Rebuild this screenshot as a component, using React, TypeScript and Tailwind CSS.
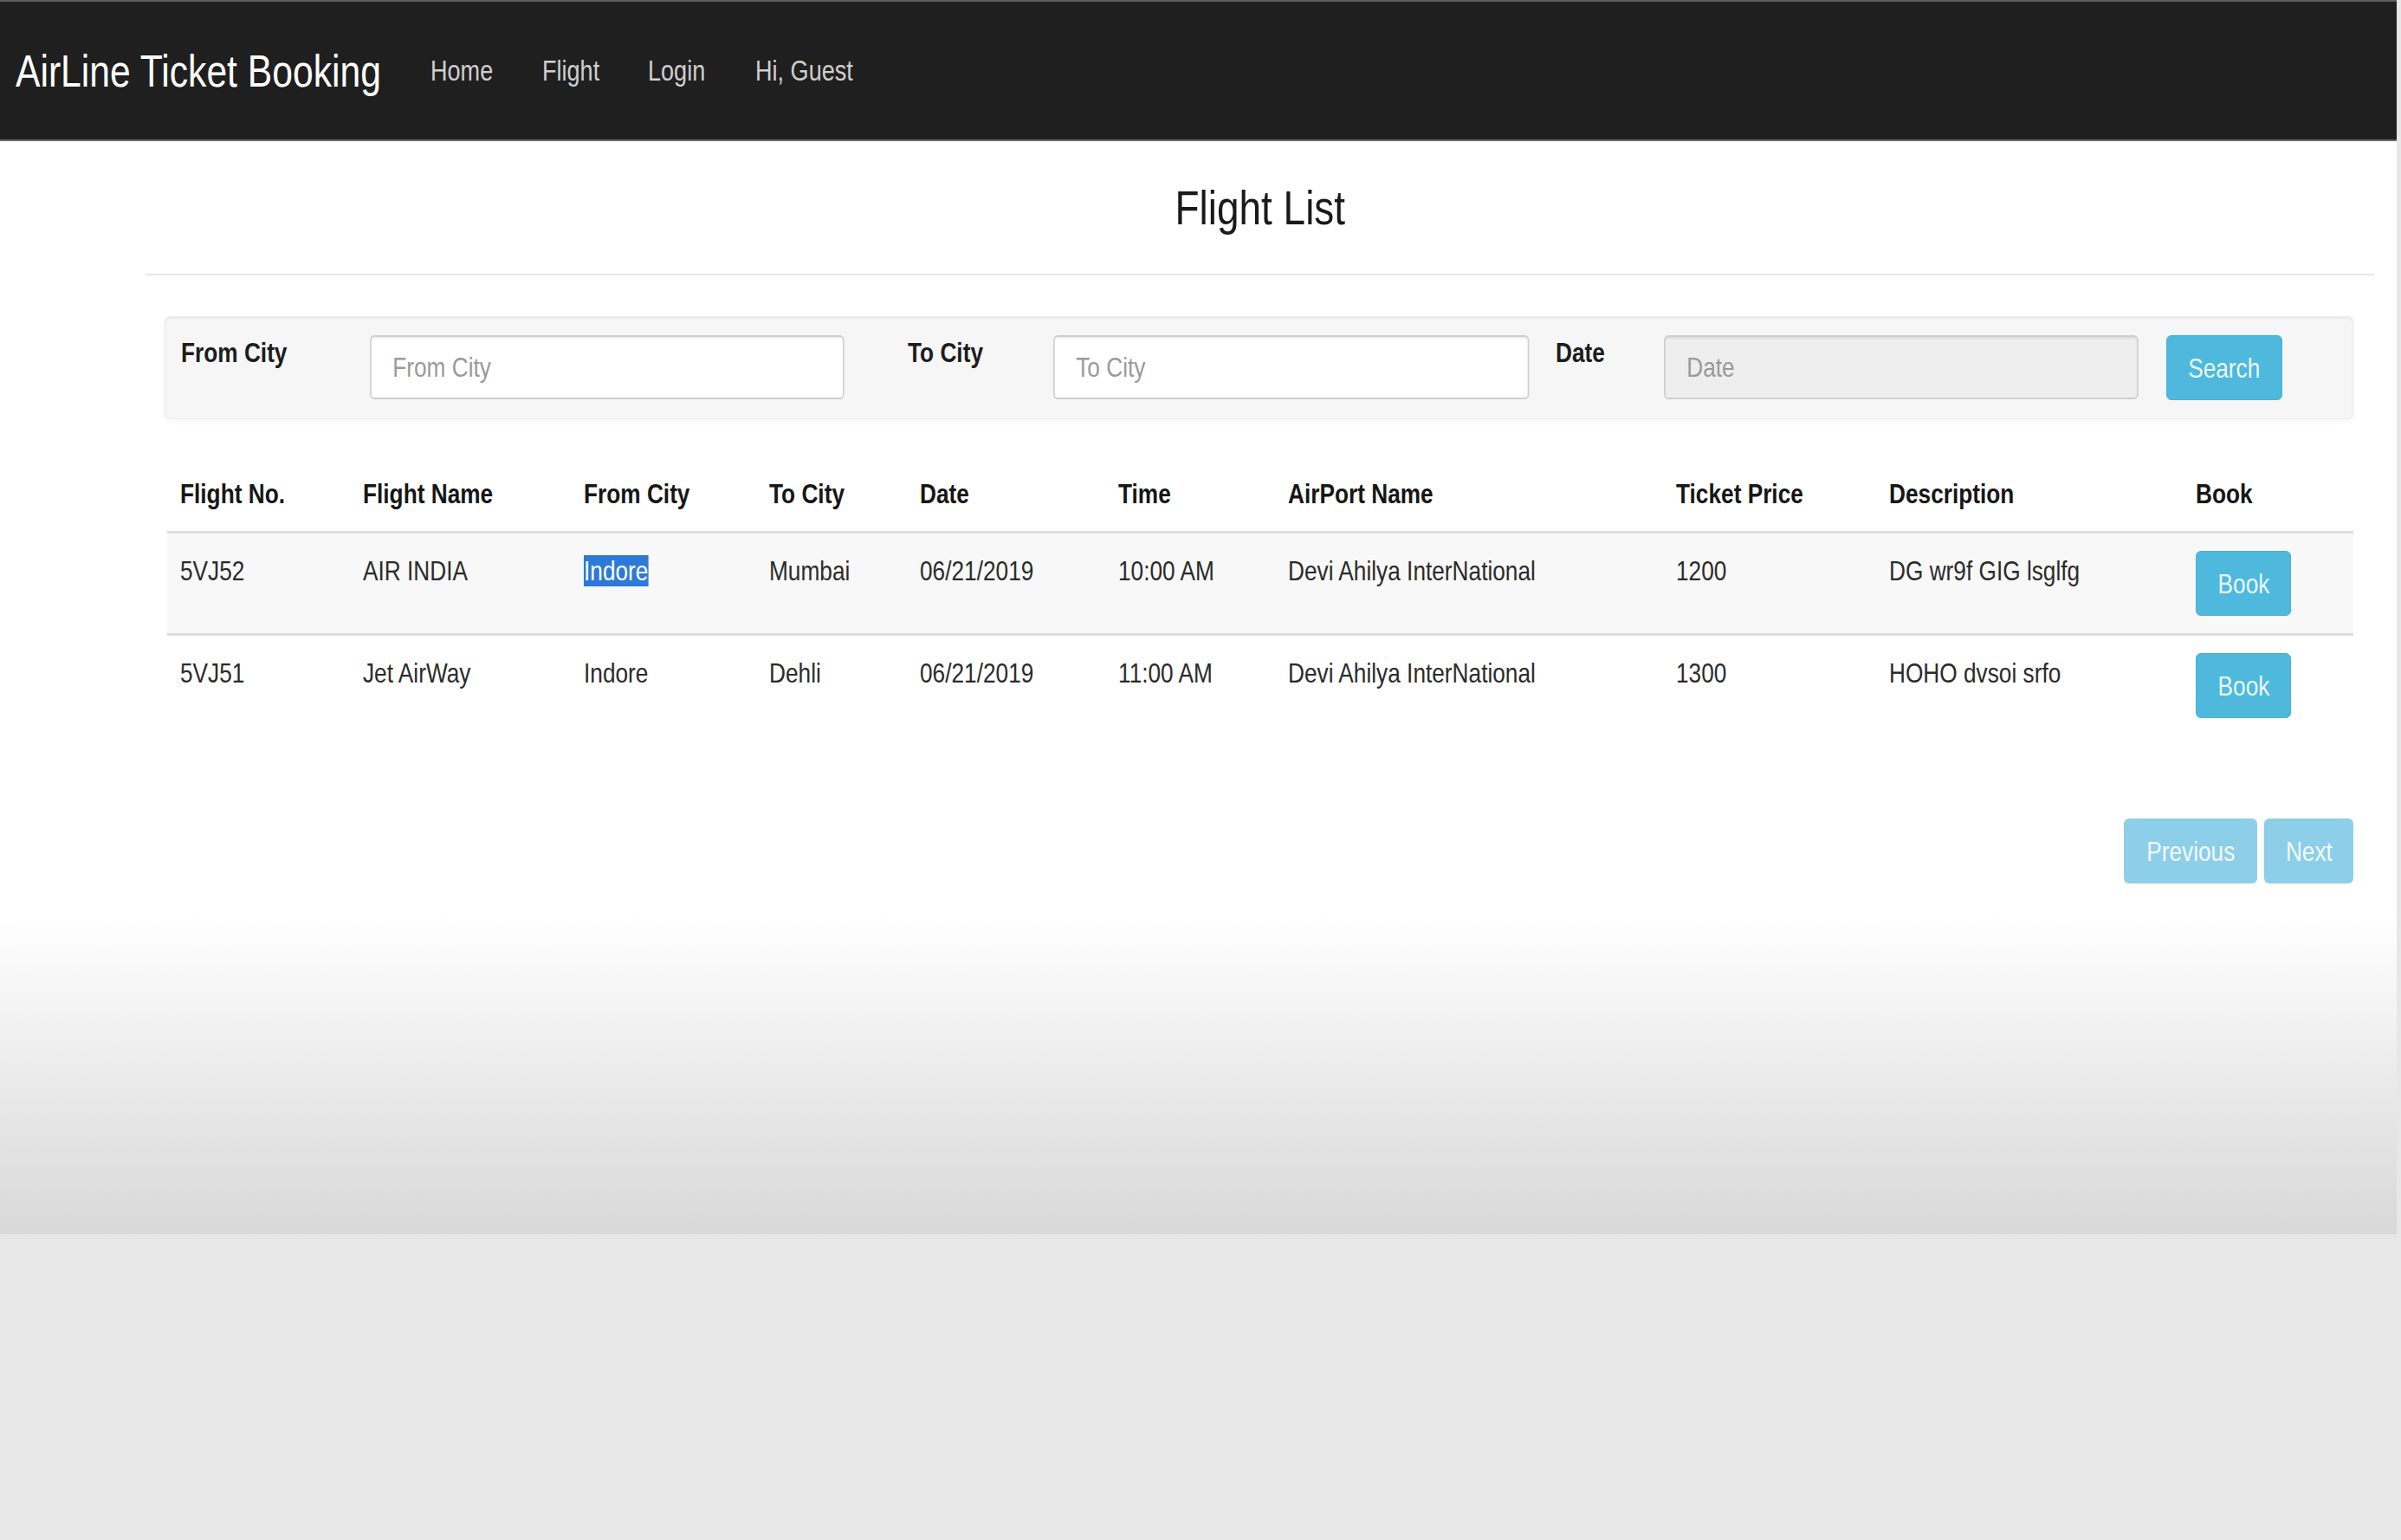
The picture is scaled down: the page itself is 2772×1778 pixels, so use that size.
import React from 'react'
import clsx from 'clsx'

interface Flight {
  no: string
  name: string
  from: string
  to: string
  date: string
  time: string
  airport: string
  price: string
  desc: string
}

const flights: Flight[] = [
  {
    no: '5VJ52',
    name: 'AIR INDIA',
    from: 'Indore',
    to: 'Mumbai',
    date: '06/21/2019',
    time: '10:00 AM',
    airport: 'Devi Ahilya InterNational',
    price: '1200',
    desc: 'DG wr9f GIG lsglfg',
  },
  {
    no: '5VJ51',
    name: 'Jet AirWay',
    from: 'Indore',
    to: 'Dehli',
    date: '06/21/2019',
    time: '11:00 AM',
    airport: 'Devi Ahilya InterNational',
    price: '1300',
    desc: 'HOHO dvsoi srfo',
  },
]

const headers = [
  'Flight No.',
  'Flight Name',
  'From City',
  'To City',
  'Date',
  'Time',
  'AirPort Name',
  'Ticket Price',
  'Description',
  'Book',
]

const colWidths = [
  'w-[211px]',
  'w-[255px]',
  'w-[214px]',
  'w-[174px]',
  'w-[229px]',
  'w-[196px]',
  'w-[448px]',
  'w-[246px]',
  'w-[354px]',
  'w-[197px]',
]

const cell = 'px-[15px] pt-[20px] pb-[20px] align-top text-left whitespace-nowrap'

// the screenshot's type is narrow (Arial Narrow proportions), squeeze regular Liberation Sans
function Narrow({ children, center, className }: { children: React.ReactNode; center?: boolean; className?: string }) {
  return (
    <span
      className={clsx(
        'inline-block scale-x-[0.82] whitespace-nowrap',
        center ? 'origin-center' : 'origin-left',
        className,
      )}
    >
      {children}
    </span>
  )
}

function NavBar() {
  const link = 'text-[33px] leading-none text-[#cfcfcf]'
  return (
    <nav className="flex h-[163px] items-center border-t-2 border-b-2 border-t-[#5e5e5e] border-b-[#6a6a6a] bg-[#1f1f1f]">
      <a className="ml-[18px] w-[479px] text-[52px] leading-none text-white">
        <Narrow>AirLine Ticket Booking</Narrow>
      </a>
      <a className={clsx('w-[129px]', link)}>
        <Narrow>Home</Narrow>
      </a>
      <a className={clsx('w-[122px]', link)}>
        <Narrow>Flight</Narrow>
      </a>
      <a className={clsx('w-[124px]', link)}>
        <Narrow>Login</Narrow>
      </a>
      <a className={link}>
        <Narrow>Hi, Guest</Narrow>
      </a>
    </nav>
  )
}

function Field({ width, inner, placeholder, grey }: { width: string; inner: string; placeholder: string; grey?: boolean }) {
  return (
    <div className={clsx('h-[74px] shrink-0', width)}>
      <input
        placeholder={placeholder}
        readOnly={grey}
        className={clsx(
          'h-[74px] origin-left scale-x-[0.82] rounded-[6px] border-2 border-[#cfcfcf] px-[30px] text-[32px] text-[#333] shadow-[inset_0_2px_2px_rgba(0,0,0,0.075)] outline-none placeholder:text-[#9a9a9a]',
          inner,
          grey ? 'bg-[#eeeeee]' : 'bg-white',
        )}
      />
    </div>
  )
}

function SearchBar() {
  const label = 'text-[32px] leading-[40px] font-bold text-[#1c1c1c]'
  return (
    <div className="flex w-[2527px] items-start rounded-[6px] border border-[#ececec] bg-[#f6f6f6] pt-[21px] pb-[21px] pl-[18px] shadow-[inset_0_2px_3px_rgba(0,0,0,0.05),0_2px_8px_rgba(0,0,0,0.04)]">
      <label className={clsx('w-[218px] shrink-0', label)}>
        <Narrow>From City</Narrow>
      </label>
      <Field width="w-[548px]" inner="w-[668px]" placeholder="From City" />
      <label className={clsx('ml-[73px] w-[168px] shrink-0', label)}>
        <Narrow>To City</Narrow>
      </label>
      <Field width="w-[549px]" inner="w-[670px]" placeholder="To City" />
      <label className={clsx('ml-[31px] w-[125px] shrink-0', label)}>
        <Narrow>Date</Narrow>
      </label>
      <Field width="w-[548px]" inner="w-[668px]" placeholder="Date" grey />
      <button className="ml-[32px] h-[75px] w-[134px] shrink-0 rounded-[6px] border border-[#43b1d8] bg-[#4fb8dd] text-[32px] text-[#eaf7fc]">
        <Narrow center>Search</Narrow>
      </button>
    </div>
  )
}

function FlightTable() {
  return (
    <table className="ml-[3px] mt-[43px] w-[2524px] table-fixed border-collapse text-[32px] leading-[46px]">
      <colgroup>
        {colWidths.map((w) => (
          <col key={w} className={w} />
        ))}
      </colgroup>
      <thead>
        <tr>
          {headers.map((h) => (
            <th key={h} className={clsx(cell, 'border-b-[3px] border-[#dddddd] font-bold text-[#161616]')}>
              <Narrow>{h}</Narrow>
            </th>
          ))}
        </tr>
      </thead>
      <tbody>
        {flights.map((f, i) => (
          <tr key={f.no} className={i === 0 ? 'bg-[#f8f8f8]' : 'border-t-[3px] border-[#dddddd] bg-white'}>
            <td className={cell}>
              <Narrow>{f.no}</Narrow>
            </td>
            <td className={cell}>
              <Narrow>{f.name}</Narrow>
            </td>
            <td className={cell}>
              <Narrow>{i === 0 ? <span className="bg-[#2d7ad6] text-white">Indore</span> : f.from}</Narrow>
            </td>
            <td className={cell}>
              <Narrow>{f.to}</Narrow>
            </td>
            <td className={cell}>
              <Narrow>{f.date}</Narrow>
            </td>
            <td className={cell}>
              <Narrow>{f.time}</Narrow>
            </td>
            <td className={cell}>
              <Narrow>{f.airport}</Narrow>
            </td>
            <td className={cell}>
              <Narrow>{f.price}</Narrow>
            </td>
            <td className={cell}>
              <Narrow>{f.desc}</Narrow>
            </td>
            <td className={cell}>
              <button className="h-[75px] w-[110px] rounded-[6px] border border-[#43b1d8] bg-[#4fb8dd] text-[32px] text-[#eaf7fc]">
                <Narrow center>Book</Narrow>
              </button>
            </td>
          </tr>
        ))}
      </tbody>
    </table>
  )
}

export default function App() {
  return (
    <div className="min-h-[1778px] w-[2772px] bg-[#e7e7e7] font-['Liberation_Sans',Arial,sans-serif] text-[#2b2b2b]">
      <div className="h-[1425px] w-[2767px] bg-linear-to-b from-white from-74% to-[#d8d8d8]">
        <NavBar />
        <main className="ml-[168px] w-[2573px]">
          <h2 className="mt-[46px] text-center text-[56px] leading-[62px] text-[#1a1a1a]">
            <Narrow center>Flight List</Narrow>
          </h2>
          <hr className="mt-[45px] border-t-2 border-[#e8e8e8]" />
          <div className="mt-[47px] pl-[22px] pr-[24px]">
            <SearchBar />
            <FlightTable />
            <div className="mt-[96px] flex justify-end gap-[8px]">
              <button className="h-[75px] w-[154px] rounded-[6px] bg-[#8dcfe8] text-[32px] text-[#f2fafd]">
                <Narrow center>Previous</Narrow>
              </button>
              <button className="h-[75px] w-[103px] rounded-[6px] bg-[#8dcfe8] text-[32px] text-[#f2fafd]">
                <Narrow center>Next</Narrow>
              </button>
            </div>
          </div>
        </main>
      </div>
    </div>
  )
}
